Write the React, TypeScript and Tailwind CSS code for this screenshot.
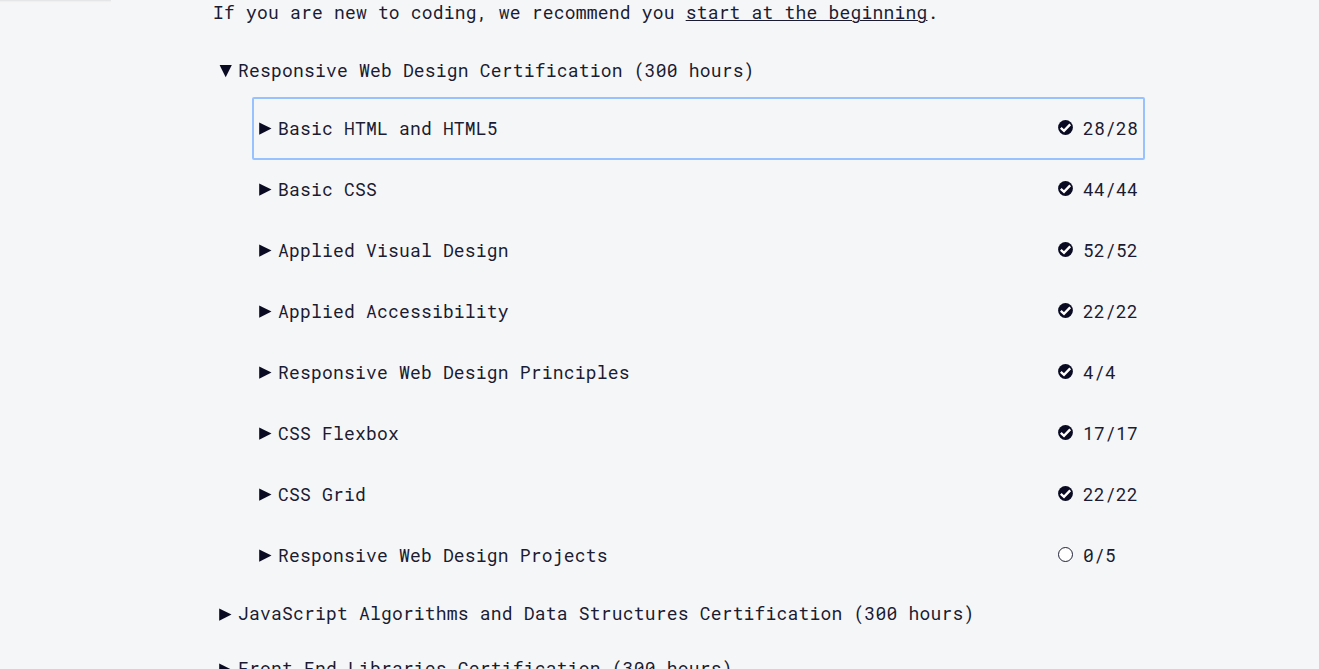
type Block = { title: string; done: number; total: number };

const blocks: Block[] = [
  { title: 'Basic HTML and HTML5', done: 28, total: 28 },
  { title: 'Basic CSS', done: 44, total: 44 },
  { title: 'Applied Visual Design', done: 52, total: 52 },
  { title: 'Applied Accessibility', done: 22, total: 22 },
  { title: 'Responsive Web Design Principles', done: 4, total: 4 },
  { title: 'CSS Flexbox', done: 17, total: 17 },
  { title: 'CSS Grid', done: 22, total: 22 },
  { title: 'Responsive Web Design Projects', done: 0, total: 5 },
];

function Caret({ open = false }: { open?: boolean }) {
  return (
    <svg className="block h-[13px] w-[13px] shrink-0" viewBox="0 0 13 13" fill="#0a0a23">
      <path d={open ? 'M0.6 0H12.8L6.7 12.3Z' : 'M0.2 0.5V12.7L12.5 6.6Z'} />
    </svg>
  );
}

function Status({ passed }: { passed: boolean }) {
  return (
    <svg className="block h-[15px] w-[15px] shrink-0" viewBox="0 0 15 15">
      {passed ? (
        <>
          <circle cx="7.5" cy="7.5" r="7.4" fill="#0a0a23" />
          <path d="M2.8 7.8L6 10.8L12.2 4.3" fill="none" stroke="#fff" strokeWidth="2.4" />
        </>
      ) : (
        <circle cx="7.5" cy="7.5" r="7" fill="#fff" stroke="#0a0a23" strokeWidth="0.9" />
      )}
    </svg>
  );
}

function BlockRow({ title, done, total, focused }: Block & { focused: boolean }) {
  return (
    <li
      className={`flex h-[61px] items-center pl-1.5 ${
        focused ? 'rounded-[1px] outline-2 outline-[#99c1ff] -outline-offset-1' : ''
      }`}
    >
      <Caret />
      <span className="-mt-0.5 ml-1.5 flex-1">{title}</span>
      <span className="flex w-[86px] items-center gap-[10px]">
        <span className="-mt-0.5">
          <Status passed={done === total} />
        </span>
        <span className="-mt-0.5">
          {done}/{total}
        </span>
      </span>
    </li>
  );
}

function Certification({ title, open = false }: { title: string; open?: boolean }) {
  return (
    <div className="flex h-7 items-center pl-1.5">
      <Caret open={open} />
      <span className="-mt-0.5 ml-1.5">{title}</span>
    </div>
  );
}

export default function App() {
  return (
    <div className="h-[669px] overflow-hidden bg-[#f5f6f7] font-['Roboto_Mono','DejaVu_Sans_Mono',monospace] text-[18px] leading-7 tracking-[0.19px] whitespace-pre text-[#1b1b32]">
      <div className="h-px w-[111px] bg-[#e5e6e7] shadow-[0_1px_1px_#eeeff0]" />
      <main className="ml-[213px] w-[931px]">
        <p className="-mt-[3px] h-[59px]">
          If you are new to coding, we recommend you{' '}
          <a className="underline decoration-1 underline-offset-1">start at the beginning</a>.
        </p>
        <Certification title="Responsive Web Design Certification (300 hours)" open />
        <ul className="mt-[13px] ml-10">
          {blocks.map((block, index) => (
            <BlockRow key={block.title} {...block} focused={index === 0} />
          ))}
        </ul>
        <div className="mt-[14px] flex flex-col gap-[27px]">
          <Certification title="JavaScript Algorithms and Data Structures Certification (300 hours)" />
          <Certification title="Front End Libraries Certification (300 hours)" />
        </div>
      </main>
    </div>
  );
}
